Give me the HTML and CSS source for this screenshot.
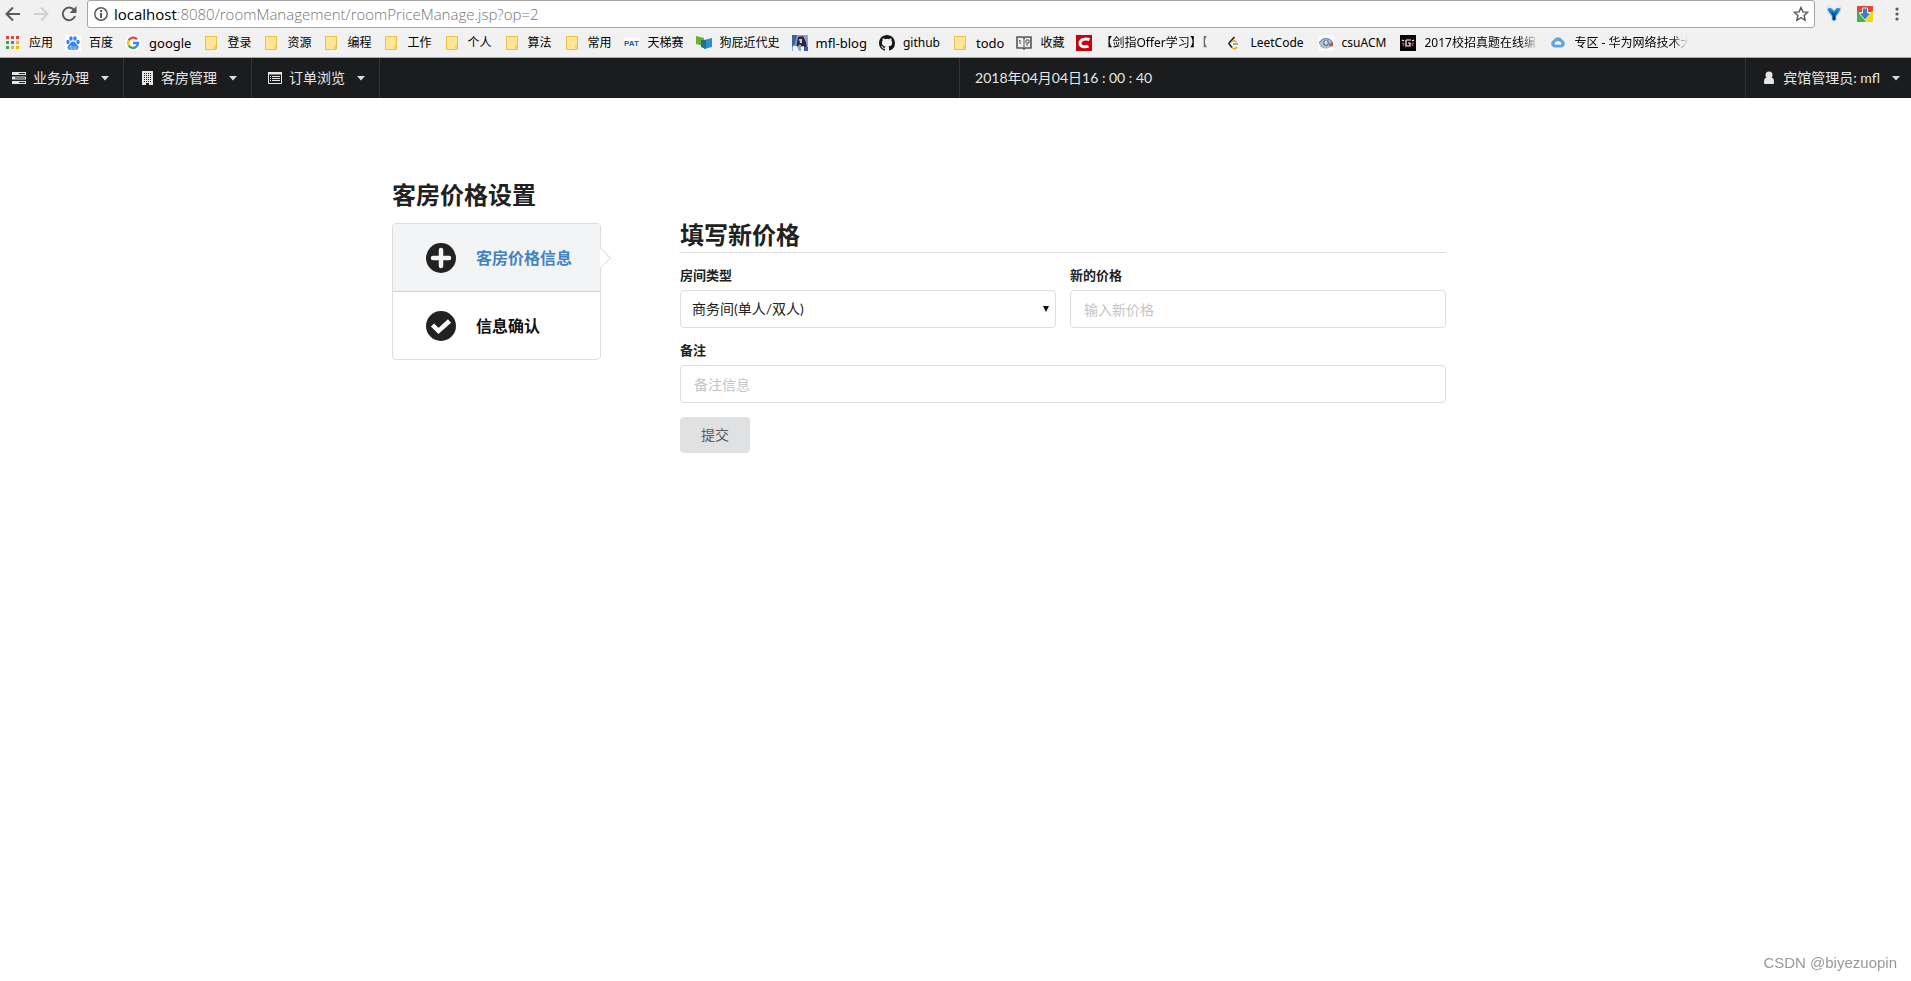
FILE: index.html
```
<!DOCTYPE html>
<html lang="zh-CN">
<head>
<meta charset="utf-8">
<title>客房价格设置</title>
<link rel="stylesheet" href="styles.css">
</head>
<body>
<svg class="defs" width="0" height="0" aria-hidden="true">
  <symbol id="folder" viewBox="0 0 16 16"><path d="M2.5 1.5h11v9.5h-1v3.500h-10z" fill="#ffe694" stroke="#e9c148"/><path d="M12 10.500h1.500v3.500H12z" fill="#ffe694" stroke="#e9c148"/></symbol>
  <symbol id="caret" viewBox="0 0 8 5"><path d="M0 0h8L4 4.500z" fill="currentColor"/></symbol>
</svg>

<header class="browser">
  <div class="toolbar">
    <button class="tool" aria-label="后退"><svg width="16" height="16" viewBox="0 0 16 16" fill="none" stroke="#5a5a5a" stroke-width="2"><path d="M15 8H2M8 1.500L1.500 8 8 14.500"/></svg></button>
    <button class="tool" aria-label="前进"><svg width="16" height="16" viewBox="0 0 16 16" fill="none" stroke="#d0d0d0" stroke-width="2"><path d="M1 8h13M8 1.500L14.500 8 8 14.500"/></svg></button>
    <button class="tool" aria-label="刷新"><svg width="16" height="16" viewBox="0 0 16 16"><path d="M13 4A6.300 6.300 0 1 0 14 10" fill="none" stroke="#5a5a5a" stroke-width="2"/><path d="M15.500 0v7h-7z" fill="#5a5a5a"/></svg></button>
    <div class="address">
      <svg width="14" height="14" viewBox="0 0 14 14"><circle cx="7" cy="7" r="6.200" fill="none" stroke="#5a5a5a" stroke-width="1.500"/><path d="M6 6h2v5H6zM6 3h2v2H6z" fill="#5a5a5a"/></svg>
      <span class="url"><span class="host">localhost</span>:8080/roomManagement/roomPriceManage.jsp?op=2</span>
      <svg width="16" height="16" viewBox="0 0 16 16"><path d="M8 1.500l1.900 4.400 4.800.4-3.600 3.200 1.100 4.700L8 11.700l-4.200 2.500 1.100-4.700L1.300 6.300l4.800-.4z" fill="none" stroke="#5a5a5a" stroke-width="1.400"/></svg>
    </div>
    <div class="extensions">
      <svg width="16" height="16" viewBox="0 0 16 16"><path d="M1 1.500l4-1 3 4 3-4 4 1-1 5-3.500 4v4L8 15.500 5.500 14v-4L2 6.500z" fill="#fff" stroke="#d5d9dd"/><path d="M1.500 2.500L5 2l3 3 3-3 3.500.5-1.500 4-3 3.500v3.500L8 15l-2-1.500V10L3 6.500z" fill="#1686d0"/><path d="M5 5l3 3 3-3-2 5v4H7v-4z" fill="#083a79"/></svg>
      <svg width="16" height="16" viewBox="0 0 16 16"><path d="M0 0h16v6H0z" fill="#e84435"/><path d="M0 5l8 4v7H0z" fill="#4bae4f"/><path d="M16 5L8 9v7h8z" fill="#ffd500"/><path d="M5.500 2h5v5H14l-6 7-6-7h3.500z" fill="#3d7fc4" stroke="#e9e9e9"/></svg>
      <svg width="16" height="16" viewBox="0 0 16 16" fill="#5a5a5a"><circle cx="9" cy="3" r="1.600"/><circle cx="9" cy="8" r="1.600"/><circle cx="9" cy="13" r="1.600"/></svg>
    </div>
  </div>
  <nav class="bookmarks" aria-label="书签">
    <a href="#"><svg viewBox="0 0 16 16"><path d="M1 1h3v3H1zM6 1h3v3H6zM11 1h3v3h-3z" fill="#ea4335"/><path d="M1 6h3v3H1z" fill="#34a853"/><path d="M6 6h3v3H6z" fill="#2f86ef"/><path d="M11 6h3v3h-3zM6 11h3v3H6zM11 11h3v3h-3z" fill="#f9b406"/><path d="M1 11h3v3H1z" fill="#34a853"/></svg><span>应用</span></a>
    <a href="#"><svg viewBox="0 0 16 16"><path d="M0 0h16v16H0z" fill="#fff"/><g fill="#3284f2"><ellipse cx="3" cy="7" rx="1.700" ry="2.200"/><ellipse cx="6" cy="3.500" rx="1.700" ry="2.300"/><ellipse cx="10" cy="3.500" rx="1.700" ry="2.300"/><ellipse cx="13" cy="7" rx="1.700" ry="2.200"/><path d="M8 6.500c2 0 2.500 2.200 4.500 3.800 2 2 .5 5-2 4.700-2-.3-3-.3-5 0-2.500.3-4-2.700-2-4.700C5.500 8.700 6 6.500 8 6.500z"/></g><path d="M5 11h2v3H5zM9 11v3h2v-3" fill="none" stroke="#b8d5ff" stroke-width=".8"/></svg><span>百度</span></a>
    <a href="#"><svg viewBox="0 0 16 16"><circle cx="8" cy="8" r="8" fill="#fff"/><g fill="none" stroke-width="2.400"><path d="M12 4.300A5 5 0 0 0 3.700 5.500" stroke="#ea4335"/><path d="M3.700 5.500a5 5 0 0 0 0 5" stroke="#fbbc05"/><path d="M3.700 10.500A5 5 0 0 0 11.300 11.700" stroke="#34a853"/><path d="M11.300 11.700A5 5 0 0 0 13 8H8" stroke="#4285f4"/></g></svg><span class="latin">google</span></a>
    <a href="#"><svg><use href="#folder"/></svg><span>登录</span></a>
    <a href="#"><svg><use href="#folder"/></svg><span>资源</span></a>
    <a href="#"><svg><use href="#folder"/></svg><span>编程</span></a>
    <a href="#"><svg><use href="#folder"/></svg><span>工作</span></a>
    <a href="#"><svg><use href="#folder"/></svg><span>个人</span></a>
    <a href="#"><svg><use href="#folder"/></svg><span>算法</span></a>
    <a href="#"><svg><use href="#folder"/></svg><span>常用</span></a>
    <a href="#"><svg viewBox="0 0 16 16"><path d="M0 3h16v9H0z" fill="#fff"/><text x="0" y="11" class="pat">PAT</text></svg><span>天梯赛</span></a>
    <a href="#"><svg viewBox="0 0 16 16"><path d="M0 1l8 2v8l-8-2z" fill="#65b32e"/><path d="M8 5l8-2v9l-8 2z" fill="#318cc7"/><path d="M5 5l5 0v9l-5-2z" fill="#1d748c"/></svg><span>狗屁近代史</span></a>
    <a href="#"><svg viewBox="0 0 16 16"><path d="M0 0h16v16H0z" fill="#8aa3c9"/><path d="M0 0h5L3 9l-3 3z" fill="#3c639e"/><path d="M6 2l5-1 3 6 1 7-4-1-3-4-4 4z" fill="#2b2938"/><path d="M7 4h3v4H8z" fill="#e6c4bd"/><path d="M1 11l4 0 2 5H1zM9 12l3-1v5H9z" fill="#eef2fb"/><path d="M12 12h4v4h-4z" fill="#345aa8"/></svg><span class="latin">mfl-blog</span></a>
    <a href="#"><svg viewBox="0 0 16 16"><path fill="#181717" d="M8 0C3.580 0 0 3.580 0 8c0 3.540 2.290 6.530 5.470 7.590.4.070.55-.17.55-.38v-1.490c-2.010.37-2.530-.49-2.690-.94-.09-.23-.48-.94-.82-1.130-.28-.15-.68-.52-.01-.53.63-.01 1.080.58 1.230.82.720 1.210 1.870.87 2.330.66.070-.52.280-.87.510-1.070-1.780-.2-3.640-.89-3.640-3.950 0-.87.310-1.590.82-2.150-.08-.2-.36-1.020.08-2.120 0 0 .67-.21 2.200.82a7.600 7.600 0 0 1 4 0c1.530-1.040 2.200-.82 2.200-.82.440 1.100.160 1.920.08 2.120.51.560.82 1.270.82 2.150 0 3.070-1.870 3.750-3.650 3.950.29.250.54.730.54 1.480v2.200c0 .21.150.46.550.38A8 8 0 0 0 16 8c0-4.420-3.580-8-8-8z"/></svg><span>github</span></a>
    <a href="#"><svg><use href="#folder"/></svg><span class="latin">todo</span></a>
    <a href="#"><svg viewBox="0 0 16 16"><path d="M1 2l6 0 1 1 1-1h6v11l-6 0-1 1-1-1H1z" fill="#eee" stroke="#555" stroke-width="1.600"/><path d="M8 3v11M4 5v4M3 6l1-1M10 5h3v3h-2v3M10 5v3" fill="none" stroke="#555"/></svg><span>收藏</span></a>
    <a href="#"><svg viewBox="0 0 16 16"><path d="M0 0h16v16H0z" fill="#c7000b"/><path d="M13.500 4.500C9 3 4.500 4.500 4 8c-.4 3.500 4 4.500 8.500 3.400" fill="none" stroke="#fff" stroke-width="3"/></svg><span class="clip">【剑指Offer学习】【</span></a>
    <a href="#"><svg viewBox="0 0 16 16" fill="none" stroke-width="1.700"><path d="M8.500 2L3.500 7.500q-1 1 0 2l2.500 3" stroke="#222"/><path d="M6 12.500q2 2 4 .5l1-1M6 6.500q2-2 4.500.5" stroke="#f5a623"/><path d="M7 9h5" stroke="#999"/></svg><span class="site">LeetCode</span></a>
    <a href="#"><svg viewBox="0 0 16 16"><path d="M0 0h16v16H0z" fill="#fafafa"/><ellipse cx="8" cy="8" rx="7" ry="5" fill="#aebfd7"/><path d="M1 8q7-9 14 0" fill="none" stroke="#6482b4"/><path d="M11 9l4-2v4l-3 1z" fill="#c34a50"/><circle cx="8" cy="8" r="3" fill="#5681bd"/><path d="M6 8l2-3 2 3-2 2z" fill="#e7ddb0"/><path d="M2 11q6 4 11 0" fill="none" stroke="#b9ac83"/></svg><span class="site">csuACM</span></a>
    <a href="#"><svg viewBox="0 0 16 16"><path d="M0 0h16v16H0z" fill="#070707"/><path d="M6 5h5M6 5v6h4V8H8M2 5l2 1M14 5l-2 1" fill="none" stroke="#fff" stroke-width="1.200"/><path d="M2 8l2 1-1 2M14 8l-2 1 1 2M5 12h1" fill="none" stroke="#e34b31" stroke-width="1.200"/></svg><span class="clip">2017校招真题在线编</span></a>
    <a href="#"><svg viewBox="0 0 16 16"><path d="M4 12.500a4 4 0 0 1-.5-7.500 5 5 0 0 1 9 0A4 4 0 0 1 12 12.500z" fill="#63a4e0"/><path d="M5 9.500q-1-2 1-2.500 2-2 4 0 2 .5 1 2.500z" fill="#fff"/></svg><span class="clip">专区 - 华为网络技术大</span></a>
  </nav>
</header>

<nav class="menu" aria-label="主菜单">
  <button class="item first"><svg class="icon" viewBox="0 0 14 12"><path d="M0 0h14v3H0zM0 4.500h14v3H0zM0 9h14v3H0z" fill="currentColor"/><path d="M7 1.500h6M3 6h10M7 10.500h6" stroke="#1b1c1d"/></svg><span>业务办理</span><svg class="caret"><use href="#caret"/></svg></button>
  <button class="item"><svg class="icon" viewBox="0 0 14 14"><path d="M2 0h11v14H9v-2H6v2H2z" fill="currentColor"/><path d="M4 2.500h7M4 4.500h7M4 6.500h7M4 8.500h7M4 10.500h7" stroke="#1b1c1d" stroke-dasharray="1 1"/></svg><span>客房管理</span><svg class="caret"><use href="#caret"/></svg></button>
  <button class="item"><svg class="icon" viewBox="0 0 14 12"><path d="M.5.500h13v11H.5z" fill="none" stroke="currentColor"/><path d="M0 0h14v2.500H0z" fill="currentColor"/><path d="M2 4.500h1m1 0h8M2 6.500h1m1 0h8M2 8.500h1m1 0h8" stroke="currentColor"/></svg><span>订单浏览</span><svg class="caret"><use href="#caret"/></svg></button>
  <time class="clock">2018年04月04日16 : 00 : 40</time>
  <button class="item user"><svg class="icon" viewBox="0 0 14 14"><circle cx="7" cy="4" r="3.500" fill="currentColor"/><path d="M4.500 6.500h5q2.500.5 2.500 4v1.500q0 1-1 1H3q-1 0-1-1v-1.500q0-3.500 2.500-4z" fill="currentColor"/></svg><span>宾馆管理员: mfl</span><svg class="caret"><use href="#caret"/></svg></button>
</nav>

<main class="page">
  <aside class="sidebar">
    <h2>客房价格设置</h2>
    <div class="steps">
      <a class="step active" href="#"><svg viewBox="0 0 30 30"><circle cx="15" cy="15" r="15" fill="#222"/><path d="M15 7v16M7 15h16" stroke="#f3f4f5" stroke-width="4.500" stroke-linecap="round"/></svg><span>客房价格信息</span></a>
      <a class="step" href="#"><svg viewBox="0 0 30 30"><circle cx="15" cy="15" r="15" fill="#222"/><path d="M6.500 14l6 6L23.500 10" fill="none" stroke="#fff" stroke-width="4.500"/></svg><span>信息确认</span></a>
    </div>
  </aside>
  <form class="form">
    <h2>填写新价格</h2>
    <div class="fields">
      <div class="field">
        <label for="room">房间类型</label>
        <div class="select"><select id="room"><option>商务间(单人/双人)</option></select><svg viewBox="0 0 6 6"><path d="M0 0h6L3 6z" fill="#111"/></svg></div>
      </div>
      <div class="field">
        <label for="price">新的价格</label>
        <input id="price" type="text" placeholder="输入新价格">
      </div>
    </div>
    <div class="field">
      <label for="note">备注</label>
      <input id="note" type="text" placeholder="备注信息">
    </div>
    <button class="submit" type="button">提交</button>
  </form>
</main>
<div class="watermark">CSDN @biyezuopin</div>
</body>
</html>
```
FILE: styles.css
```
* { box-sizing: border-box; }

body {
  margin: 0;
  background: #fff;
  color: #212121;
  font: 14px/20px Lato, "Noto Sans CJK SC", sans-serif;
}

button, input, select { font: inherit; color: inherit; }
a { color: inherit; text-decoration: none; }
svg { flex: none; display: block; }
.defs { position: absolute; }

/* browser chrome */
.browser {
  background: #f1f1f1;
  border-bottom: 1px solid #a9a9a9;
  font-family: "Noto Sans", "Noto Sans CJK SC", sans-serif;
}

.toolbar { display: flex; align-items: center; height: 28px; padding-left: 5px; }
.tool { width: 28px; padding: 0; border: 0; background: none; }

.address {
  flex: 1;
  display: flex;
  align-items: center;
  gap: 6px;
  height: 28px;
  margin-left: -2px;
  padding: 0 5px 0 6px;
  background: #fff;
  border: 1px solid #a6a6a6;
  border-radius: 3px;
}

.url {
  flex: 1;
  color: #757575;
  font-family: "Open Sans", sans-serif;
  font-size: 15px;
  font-weight: 300;
}
.host { color: #000; font-weight: 400; }
.extensions { display: flex; gap: 15px; padding: 0 7px 0 11px; }

.bookmarks {
  display: flex;
  gap: 12px;
  height: 29px;
  padding: 1px 5px 0;
  color: #000;
  font-size: 12px;
  white-space: nowrap;
}
.bookmarks a { display: flex; align-items: center; gap: 8px; }
.bookmarks svg { width: 16px; height: 16px; }
.bookmarks .latin { font-size: 13px; }
.bookmarks .site { padding-right: 2px; }
.pat { font: bold 8px "Liberation Sans", sans-serif; fill: #0a5cb0; }
.clip {
  width: 114px;
  -webkit-mask-image: linear-gradient(to right, #000 85%, transparent);
  mask-image: linear-gradient(to right, #000 85%, transparent);
}

/* main menu */
.menu {
  display: flex;
  align-items: stretch;
  height: 40px;
  background: #1b1c1d;
  color: #e6e6e6;
  white-space: nowrap;
}
.item {
  display: flex;
  align-items: center;
  padding: 0 14px 0 16px;
  border: 0;
  border-right: 1px solid #323334;
  background: none;
}
.item.first { padding-left: 12px; }
.icon { width: 14px; height: 14px; margin-right: 7px; }
.caret { width: 8px; height: 5px; margin-left: 12px; color: #dcdcdc; }
.clock {
  display: flex;
  align-items: center;
  margin-left: auto;
  padding: 0 14px 0 15px;
  border-left: 1px solid #323334;
}
.item.user {
  margin-left: auto;
  padding-right: 11px;
  border-right: 0;
  border-left: 1px solid #323334;
}

/* page */
.page {
  display: flex;
  align-items: flex-start;
  gap: 79px;
  max-width: 1127px;
  margin: 0 auto;
  padding-top: 81px;
}
h2 { margin: 0; font-size: 24px; line-height: 32px; }
.sidebar { flex: 0 0 209px; }

.steps {
  margin-top: 12px;
  border: 1px solid #dcddde;
  border-radius: 4px;
}
.step {
  position: relative;
  display: flex;
  align-items: center;
  gap: 20px;
  height: 67px;
  padding-left: 33px;
  color: #111;
  font-size: 16px;
  font-weight: bold;
}
.step svg { width: 30px; height: 30px; }
.step.active {
  height: 68px;
  background: #f3f4f5;
  border-bottom: 1px solid #d4d4d5;
  border-radius: 3px 3px 0 0;
  color: #4183c4;
}
.step.active::after {
  content: "";
  position: absolute;
  top: 26px;
  right: -8px;
  width: 15px;
  height: 15px;
  background: #fff;
  border: solid #d4d4d5;
  border-width: 1px 1px 0 0;
  clip-path: polygon(0 0, 100% 0, 100% 100%);
  transform: rotate(45deg);
}

.form { flex: 0 1 766px; padding-top: 40px; }
.form h2 { padding-bottom: 1px; border-bottom: 1px solid #dededf; }
.fields { display: grid; grid-template-columns: 1fr 1fr; gap: 14px; }
.field { margin-top: 12px; }
label {
  display: block;
  margin-bottom: 5px;
  font-size: 13px;
  font-weight: bold;
}
.select { position: relative; }
.select svg { position: absolute; top: 16px; right: 7px; width: 6px; height: 6px; }
input, select {
  display: block;
  width: 100%;
  height: 38px;
  padding: 0 13px;
  border: 1px solid #dededf;
  border-radius: 4px;
  background: #fff;
}
select { appearance: none; padding: 0 11px; }
::placeholder { color: #c4c4c4; }

.submit {
  display: block;
  width: 70px;
  height: 36px;
  margin-top: 14px;
  padding: 0;
  border: 0;
  border-radius: 4px;
  background: #e0e1e2;
  color: #5a5a5a;
}

.watermark {
  position: fixed;
  right: 14px;
  bottom: 8px;
  color: #999;
  font: 15px/20px "Liberation Sans", sans-serif;
}
```
